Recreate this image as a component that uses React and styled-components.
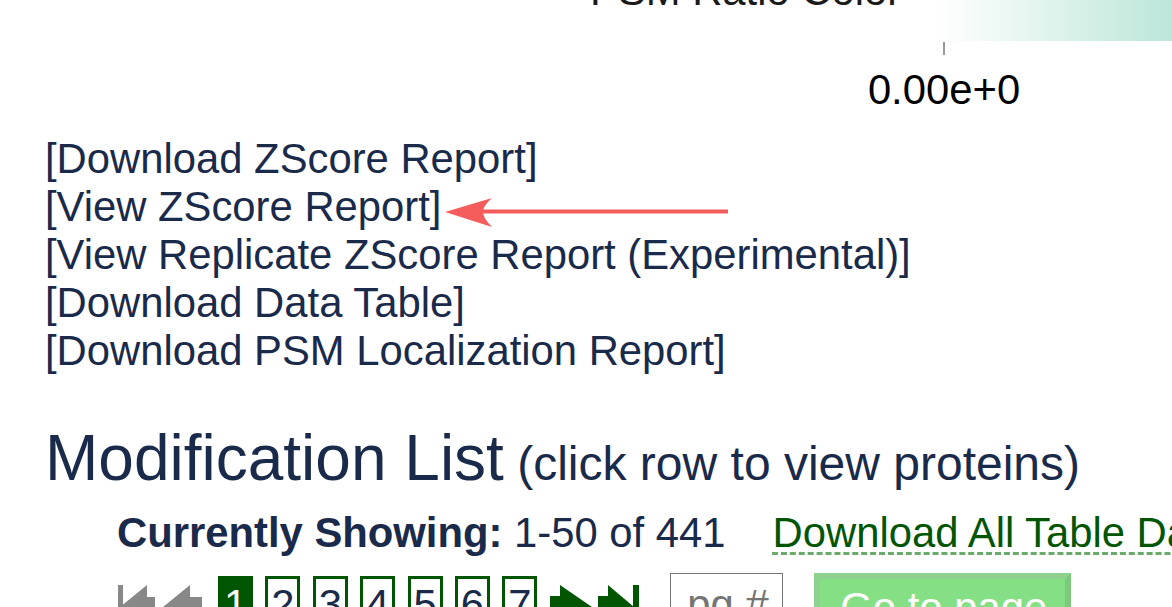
import React from "react";
import styled, { createGlobalStyle } from "styled-components";

const GlobalStyle = createGlobalStyle`
  html, body {
    margin: 0;
    padding: 0;
    background: #ffffff;
    overflow: hidden;
  }
  body {
    font-family: "Liberation Sans", Arial, sans-serif;
    font-size: 41.8px;
    color: #1a2a4a;
  }
`;

const Page = styled.div`
  width: 1172px;
  height: 607px;
  overflow: hidden;
`;

const LegendSvg = styled.svg`
  display: block;
`;

const Content = styled.div`
  padding-left: 45px;
  margin-top: 17px;
`;

const LinkList = styled.div`
  position: relative;
  display: flex;
  flex-direction: column;
  align-items: flex-start;
`;

const BracketLink = styled.a`
  color: #1a2a4a;
  text-decoration: none;
  white-space: nowrap;
  cursor: pointer;
`;

const Annotation = styled.svg`
  position: absolute;
  left: 350px;
  top: 60px;
  overflow: visible;
`;

const Heading = styled.h2`
  margin: 46px 0 0;
  font-size: 64px;
  font-weight: normal;
  color: #1a2a4a;
  white-space: nowrap;
`;

const HeadingNote = styled.span`
  font-size: 48px;
`;

const Section = styled.div`
  padding-left: 72px;
`;

const StatusRow = styled.div`
  margin-top: 14px;
  white-space: nowrap;
`;

const StatusLabel = styled.b`
  font-weight: bold;
`;

const DownloadAll = styled.a`
  margin-left: 47px;
  color: #005500;
  text-decoration: underline dashed #6aaa6a;
  text-decoration-thickness: 3px;
  text-underline-offset: 5px;
  cursor: pointer;
`;

const Pager = styled.div`
  display: flex;
  align-items: flex-start;
  margin-top: 16px;
`;

const PagerIcon = styled.svg`
  display: block;
  flex: none;
  margin-right: ${(p) => p.$mr}px;
`;

const PageBox = styled.span`
  flex: none;
  box-sizing: border-box;
  width: 35px;
  margin-top: 3px;
  margin-right: ${(p) => p.$mr}px;
  padding-top: 2px;
  border: 3px solid #005500;
  text-align: center;
  line-height: normal;
  color: ${(p) => (p.$active ? "#ffffff" : "#1a2a4a")};
  background: ${(p) => (p.$active ? "#005500" : "transparent")};
`;

const PageInput = styled.input`
  flex: none;
  box-sizing: border-box;
  width: 113px;
  height: 64px;
  margin: 0 31px 0 0;
  padding: 0 8px 0 16px;
  border: 1px solid #767676;
  font-family: "Liberation Sans", Arial, sans-serif;
  font-size: 41.8px;
  color: #1a2a4a;
  &::placeholder {
    color: #757575;
  }
`;

const GoButton = styled.button`
  flex: none;
  padding: 5px 18px 20px 20px;
  border: 6px solid;
  border-color: #8fd18f #7cc87c #7cc87c #8fd18f;
  background: #85e085;
  color: #ffffff;
  font-family: "Liberation Sans", Arial, sans-serif;
  font-size: 41.8px;
  line-height: normal;
  white-space: nowrap;
`;

const links = [
  "[Download ZScore Report]",
  "[View ZScore Report]",
  "[View Replicate ZScore Report (Experimental)]",
  "[Download Data Table]",
  "[Download PSM Localization Report]",
];

const pages = [1, 2, 3, 4, 5, 6, 7];

function Legend() {
  return (
    <LegendSvg width="1172" height="118">
      <defs>
        <linearGradient id="psmRatio" x1="0" x2="1" y1="0" y2="0">
          <stop offset="0" stopColor="#ffffff" />
          <stop offset="1" stopColor="#bce6d9" />
        </linearGradient>
      </defs>
      <text
        x="590"
        y="5"
        fontFamily="Liberation Sans, Arial, sans-serif"
        fontSize="41.8"
        fill="#1a1a1a"
      >
        PSM Ratio Color
      </text>
      <rect x="940" y="0" width="232" height="41" fill="url(#psmRatio)" />
      <line x1="944" y1="42" x2="944" y2="55" stroke="#9a9a9a" strokeWidth="2" />
      <text
        x="944"
        y="104"
        textAnchor="middle"
        fontFamily="Liberation Sans, Arial, sans-serif"
        fontSize="41.8"
        fill="#000000"
      >
        0.00e+0
      </text>
    </LegendSvg>
  );
}

function FirstIcon() {
  return (
    <PagerIcon width="38" height="60" $mr={8}>
      <rect x="1" y="12" width="5" height="44" fill="#888888" />
      <polygon points="30,12 3,34 30,56" fill="#888888" />
      <rect x="29" y="24" width="9" height="20" fill="#888888" />
    </PagerIcon>
  );
}

function PrevIcon() {
  return (
    <PagerIcon width="39" height="60" $mr={16}>
      <polygon points="27,12 0,34 27,56" fill="#888888" />
      <rect x="26" y="24" width="13" height="20" fill="#888888" />
    </PagerIcon>
  );
}

function NextIcon() {
  return (
    <PagerIcon width="42" height="60" $mr={6}>
      <rect x="0" y="23" width="11" height="20" fill="#005500" />
      <polygon points="10,12 42,34 10,56" fill="#005500" />
    </PagerIcon>
  );
}

function LastIcon() {
  return (
    <PagerIcon width="41" height="60" $mr={31}>
      <rect x="0" y="23" width="11" height="20" fill="#005500" />
      <polygon points="10,12 36,34 10,56" fill="#005500" />
      <rect x="35" y="12" width="6" height="44" fill="#005500" />
    </PagerIcon>
  );
}

export default function App() {
  return (
    <Page>
      <GlobalStyle />
      <Legend />
      <Content>
        <LinkList>
          {links.map((label) => (
            <BracketLink key={label}>{label}</BracketLink>
          ))}
          <Annotation width="340" height="36">
            <line x1="85" y1="16.5" x2="333" y2="16.5" stroke="#f55d5d" strokeWidth="4" />
            <path d="M50 17 L97 3 Q88 11 88 17 Q88 23 97 32 Z" fill="#f55d5d" />
          </Annotation>
        </LinkList>
        <Heading>
          Modification List<HeadingNote> (click row to view proteins)</HeadingNote>
        </Heading>
        <Section>
          <StatusRow>
            <StatusLabel>Currently Showing:</StatusLabel> 1-50 of 441
            <DownloadAll>Download All Table Data</DownloadAll>
          </StatusRow>
          <Pager>
            <FirstIcon />
            <PrevIcon />
            {pages.map((n) => (
              <PageBox key={n} $active={n === 1} $mr={n === 7 ? 13 : 12.4}>
                {n}
              </PageBox>
            ))}
            <NextIcon />
            <LastIcon />
            <PageInput placeholder="pg #" />
            <GoButton>Go to page</GoButton>
          </Pager>
        </Section>
      </Content>
    </Page>
  );
}
